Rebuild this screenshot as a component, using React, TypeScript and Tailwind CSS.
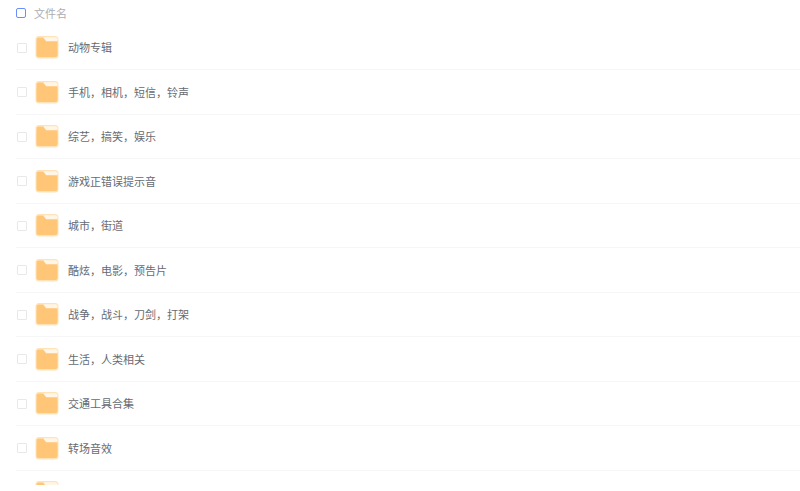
const folders = [
  "动物专辑",
  "手机，相机，短信，铃声",
  "综艺，搞笑，娱乐",
  "游戏正错误提示音",
  "城市，街道",
  "酷炫，电影，预告片",
  "战争，战斗，刀剑，打架",
  "生活，人类相关",
  "交通工具合集",
  "转场音效",
  "",
];

function FolderIcon() {
  return (
    <svg width="24" height="23" viewBox="0 0 24 23" className="shrink-0">
      <rect x="0.5" y="0" width="23" height="22.5" rx="3.5" fill="#ffe3b8" />
      <path d="M1.5 4a2.5 2.5 0 0 1 2.5-2.5h16a2.5 2.5 0 0 1 2.5 2.5v3h-21z" fill="#fff6e8" />
      <path
        d="M1.5 3.5c0-1 .8-2 2-2h4.5c1 0 1.6.5 2.2 1.2l1 1.3h11.3v15c0 1.2-1 2-2 2h-17c-1.1 0-2-.9-2-2z"
        fill="#ffc677"
      />
      <path d="M8 1.5h12.5c1.2 0 2 .8 2 2v1.7h-11.5c-.6-1-1.6-2.6-3-3.7z" fill="#fff6e8" />
    </svg>
  );
}

export default function App() {
  return (
    <div className="h-screen bg-white">
      <div className="h-[485px] overflow-hidden pl-[16px] font-['Liberation_Sans','Noto_Sans_CJK_SC',sans-serif]">
        <div className="flex h-[25.5px] items-center pt-[1px]">
          <div className="h-[10px] w-[10px] rounded-[2px] border-[1.5px] border-[#6a8ffa]" />
          <span className="ml-[8px] pt-[1px] text-[11px] text-[#abaeb4]">文件名</span>
        </div>
        {folders.map((name, i) => (
          <div key={i} className="flex h-[44.5px] items-center border-b border-[#f6f6f7] pt-[1px]">
            <div className="ml-[1px] h-[10px] w-[10px] rounded-[1px] border-[1.5px] border-[#e8e8ea] bg-white" />
            <div className="ml-[8px]">
              <FolderIcon />
            </div>
            <span className="ml-[9px] pt-[1px] text-[11px] text-[#666a72]">{name}</span>
          </div>
        ))}
      </div>
    </div>
  );
}
